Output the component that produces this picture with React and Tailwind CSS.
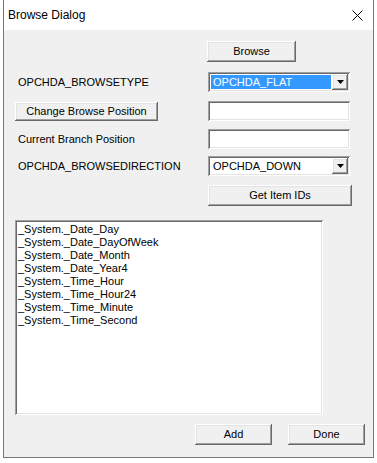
import React from "react";

const raised = "bg-[#f0f0f0] shadow-[inset_-1px_-1px_#696969,inset_1px_1px_#ffffff,inset_-2px_-2px_#a0a0a0,inset_2px_2px_#e3e3e3]";
const sunken = "bg-white shadow-[inset_1px_1px_#a0a0a0,inset_-1px_-1px_#ffffff,inset_2px_2px_#696969,inset_-2px_-2px_#e3e3e3]";

const items = [
  "_System._Date_Day",
  "_System._Date_DayOfWeek",
  "_System._Date_Month",
  "_System._Date_Year4",
  "_System._Time_Hour",
  "_System._Time_Hour24",
  "_System._Time_Minute",
  "_System._Time_Second",
];

const Button = ({ className, children }) => (
  <div className={"flex items-center justify-center text-black " + raised + " " + className}>{children}</div>
);

const Combo = ({ value, selected }) => (
  <div className={"w-[142px] h-[20px] flex p-[2px] " + sunken}>
    <div className="flex-1 p-[1px] flex">
      <div className={"flex-1 flex items-center pl-[2px] " + (selected ? "bg-[#3399ff] text-white" : "text-black")}>{value}</div>
    </div>
    <div className={"w-[16px] flex items-center justify-center " + raised}>
      <svg width="7" height="4" viewBox="0 0 7 4"><path d="M0 0h7L3.5 4z" fill="#000" /></svg>
    </div>
  </div>
);

const App = () => {
  return (
    <div className="w-[377px] h-[463px] bg-white pl-[3px] text-[11px] leading-[13px]" style={{ fontFamily: '"Liberation Sans", Arial, sans-serif' }}>
      <div className="w-[371px] h-[458px] border-x border-b border-[#777777] flex flex-col">
        <div className="h-[30px] bg-white flex items-center justify-between pl-[4px] pr-[10px] shrink-0">
          <div className="text-[12px] text-black">Browse Dialog</div>
          <svg width="11" height="11" viewBox="0 0 11 11"><path d="M0.5 0.5L10.5 10.5M10.5 0.5L0.5 10.5" stroke="#000" strokeWidth="1" /></svg>
        </div>
        <div className="flex-1 bg-[#f0f0f0] flex flex-col">
          <div className="mt-[11px] pl-[203px]">
            <Button className="w-[89px] h-[21px]">Browse</Button>
          </div>
          <div className="mt-[10px] flex items-center h-[20px]">
            <div className="w-[204px] pl-[14px]">OPCHDA_BROWSETYPE</div>
            <Combo value="OPCHDA_FLAT" selected />
          </div>
          <div className="mt-[9px] flex items-center h-[20px]">
            <div className="w-[204px] pl-[11px]">
              <Button className="w-[143px] h-[19px]">Change Browse Position</Button>
            </div>
            <div className={"w-[142px] h-[20px] " + sunken}></div>
          </div>
          <div className="mt-[8px] flex items-center h-[20px]">
            <div className="w-[204px] pl-[14px]">Current Branch Position</div>
            <div className={"w-[142px] h-[20px] " + sunken}></div>
          </div>
          <div className="mt-[7px] flex items-center h-[20px]">
            <div className="w-[204px] pl-[14px]">OPCHDA_BROWSEDIRECTION</div>
            <Combo value="OPCHDA_DOWN" />
          </div>
          <div className="mt-[9px] pl-[204px]">
            <Button className="w-[144px] h-[21px]">Get Item IDs</Button>
          </div>
          <div className="mt-[14px] ml-[11px]">
            <div className={"w-[308px] h-[195px] pt-[3px] pl-[3px] " + sunken}>
              {items.map((item, i) => (
                <div key={i} className="h-[13px] leading-[13px] text-black">{item}</div>
              ))}
            </div>
          </div>
          <div className="mt-[9px] pl-[191px] flex gap-[16px]">
            <Button className="w-[77px] h-[21px]">Add</Button>
            <Button className="w-[77px] h-[21px]">Done</Button>
          </div>
        </div>
      </div>
    </div>
  );
};

export default App;
